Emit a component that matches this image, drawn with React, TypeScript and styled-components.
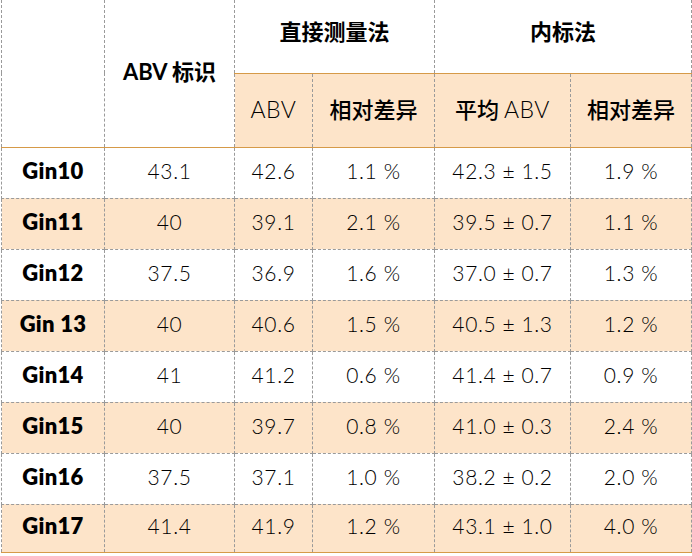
import React from "react";
import styled, { createGlobalStyle } from "styled-components";

const Global = createGlobalStyle`
  html, body { margin: 0; padding: 0; background: #ffffff; }
  body { font-family: Lato, "Noto Sans CJK SC", sans-serif; color: #000; }
`;

const PEACH = "#fde4c9";
const ORANGE = "#d69a48";
const DASH = "1px dashed #9a9a9a";

const Table = styled.table`
  margin-left: 1px;
  border-collapse: collapse;
  table-layout: fixed;
  width: 690px;
`;

const HeadCell = styled.th<{ $shade?: boolean; $topLine?: boolean; $h?: number }>`
  height: ${(p) => p.$h ?? 73}px;
  padding: 0 0 ${(p) => (p.$topLine ? 5 : 12)}px 0;
  box-sizing: border-box;
  border-left: ${DASH};
  border-right: ${DASH};
  border-top: ${(p) => (p.$topLine ? `1px solid ${ORANGE}` : "none")};
  border-bottom: ${(p) => (p.$topLine ? `1px solid ${ORANGE}` : "none")};
  background: ${(p) => (p.$shade ? PEACH : "#fff")};
  text-align: center;
  vertical-align: middle;
  font-family: "Noto Sans CJK SC", sans-serif;
  font-size: 22px;
  font-weight: ${(p) => (p.$shade ? 500 : 700)};
  color: #000;
  white-space: nowrap;
`;

const CornerCell = styled.th`
  border-left: ${DASH};
  border-right: ${DASH};
  border-bottom: 1px solid ${ORANGE};
  background: #fff;
`;

const TitleCell = styled.th`
  border-left: ${DASH};
  border-right: ${DASH};
  border-bottom: 1px solid ${ORANGE};
  background: #fff;
  text-align: center;
  vertical-align: middle;
  padding: 0 0 6px 0;
  font-family: Lato, "Noto Sans CJK SC", sans-serif;
  font-size: 22px;
  font-weight: 700;
  color: #000;
  white-space: nowrap;
`;

const Latin = styled.span`
  font-family: Lato, sans-serif;
  font-weight: 300;
  font-size: 23px;
  letter-spacing: 0.5px;
`;

const Row = styled.tr<{ $shade: boolean; $h: number }>`
  height: ${(p) => p.$h}px;
  background: ${(p) => (p.$shade ? PEACH : "#fff")};
`;

const NameCell = styled.td<{ $last: boolean }>`
  border-left: ${DASH};
  border-right: ${DASH};
  border-bottom: ${(p) => (p.$last ? `1px solid ${ORANGE}` : DASH)};
  text-align: center;
  vertical-align: middle;
  padding: 0 0 5px 0;
  font-family: Lato, sans-serif;
  font-weight: 800;
  font-size: 22px;
  letter-spacing: 0.3px;
  color: #000;
  white-space: nowrap;
`;

const ValueCell = styled.td<{ $last: boolean }>`
  border-left: ${DASH};
  border-right: ${DASH};
  border-bottom: ${(p) => (p.$last ? `1px solid ${ORANGE}` : DASH)};
  text-align: center;
  vertical-align: middle;
  padding: 0 0 5px 0;
  font-family: Lato, sans-serif;
  font-weight: 300;
  font-size: 21px;
  letter-spacing: 0.6px;
  color: #000;
  white-space: nowrap;
`;

const rows = [
  ["Gin10", "43.1", "42.6", "1.1 %", "42.3 ± 1.5", "1.9 %"],
  ["Gin11", "40", "39.1", "2.1 %", "39.5 ± 0.7", "1.1 %"],
  ["Gin12", "37.5", "36.9", "1.6 %", "37.0 ± 0.7", "1.3 %"],
  ["Gin 13", "40", "40.6", "1.5 %", "40.5 ± 1.3", "1.2 %"],
  ["Gin14", "41", "41.2", "0.6 %", "41.4 ± 0.7", "0.9 %"],
  ["Gin15", "40", "39.7", "0.8 %", "41.0 ± 0.3", "2.4 %"],
  ["Gin16", "37.5", "37.1", "1.0 %", "38.2 ± 0.2", "2.0 %"],
  ["Gin17", "41.4", "41.9", "1.2 %", "43.1 ± 1.0", "4.0 %"],
];

const widths = [103, 130, 78, 122, 136, 121];

export default function App() {
  return (
    <>
      <Global />
      <Table>
        <colgroup>
          {widths.map((w, i) => (
            <col key={i} style={{ width: w }} />
          ))}
        </colgroup>
        <thead>
          <tr style={{ height: 73 }}>
            <CornerCell rowSpan={2} />
            <TitleCell rowSpan={2}>ABV 标识</TitleCell>
            <HeadCell colSpan={2}>直接测量法</HeadCell>
            <HeadCell colSpan={2}>内标法</HeadCell>
          </tr>
          <tr style={{ height: 74 }}>
            <HeadCell $shade $topLine $h={74}>
              <Latin>ABV</Latin>
            </HeadCell>
            <HeadCell $shade $topLine $h={74}>
              相对差异
            </HeadCell>
            <HeadCell $shade $topLine $h={74}>
              平均 <Latin>ABV</Latin>
            </HeadCell>
            <HeadCell $shade $topLine $h={74}>
              相对差异
            </HeadCell>
          </tr>
        </thead>
        <tbody>
          {rows.map((r, i) => {
            const last = i === rows.length - 1;
            return (
              <Row key={r[0]} $shade={i % 2 === 1} $h={last ? 48 : 51}>
                <NameCell $last={last}>{r[0]}</NameCell>
                {r.slice(1).map((v, j) => (
                  <ValueCell key={j} $last={last}>
                    {v}
                  </ValueCell>
                ))}
              </Row>
            );
          })}
        </tbody>
      </Table>
    </>
  );
}
